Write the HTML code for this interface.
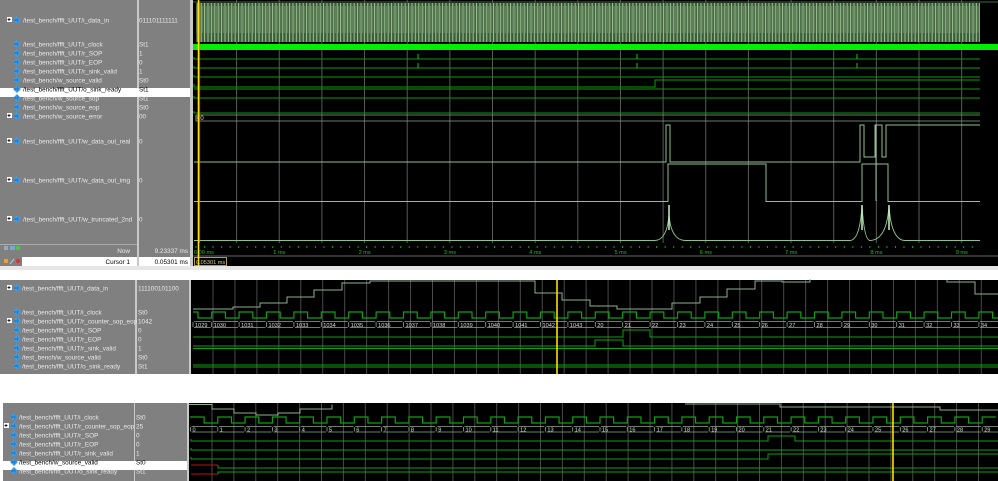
<!DOCTYPE html>
<html><head><meta charset="utf-8"><style>
html,body{margin:0;padding:0;background:#fff;width:998px;height:481px;overflow:hidden}
svg{display:block}
text{font-family:"Liberation Sans",sans-serif}
</style></head><body>
<svg id="s" width="998" height="481" xmlns="http://www.w3.org/2000/svg">
<defs>
<pattern id="dn" width="3.4" height="39" patternUnits="userSpaceOnUse">
<rect width="3.4" height="39" fill="#3e5c3a"/>
<line x1="0.6" y1="0" x2="0.6" y2="39" stroke="#a8d0a0" stroke-width="0.9"/>
<line x1="2.2" y1="6" x2="2.2" y2="33" stroke="#6f9468" stroke-width="0.8"/>
</pattern>
</defs>
<g id="g"></g>
</svg>
<script>
var g=document.getElementById('g');var o='';
function R(x,y,w,h,f){o+='<rect x="'+x+'" y="'+y+'" width="'+w+'" height="'+h+'" fill="'+f+'"/>';}
function L(x1,y1,x2,y2,c,w){o+='<line x1="'+x1+'" y1="'+y1+'" x2="'+x2+'" y2="'+y2+'" stroke="'+c+'" stroke-width="'+(w||1)+'"/>';}
function P(d,c,w){o+='<path d="'+d+'" fill="none" stroke="'+c+'" stroke-width="'+(w||1)+'"/>';}
function T(x,y,t,c,s,a){o+='<text x="'+x+'" y="'+y+'" fill="'+c+'" font-size="'+(s||7)+'"'+(a?' text-anchor="'+a+'"':'')+'>'+t+'</text>';}
function icon(x,y,exp,sel){ if(exp){R(x-7,y-3,5,5,'#fff');L(x-6.5,y-0.5,x-3.5,y-0.5,'#000',0.8);L(x-5,y-2,x-5,y+1,'#000',0.8);}
 o+='<path d="M'+(x+3)+' '+(y-4)+' L'+(x+7)+' '+(y)+' L'+(x+3)+' '+(y+4)+' L'+(x-1)+' '+y+'Z" fill="#3aa0e8"/>';
 o+='<path d="M'+(x)+' '+(y-1)+' l3 0 l0 -2 l2 3 l-2 3 l0 -2 l-3 0z" fill="#2d7fd0"/>';
 if(sel) R(x-1,y+2,4,2,'#ffd000');}
// ===== panel 1 =====
R(0,0,137,244,'#808080');R(137,0,2,266,'#c8c8c8');R(139,0,51,244,'#808080');R(190,0,3,266,'#c8c8c8');
R(193,0,805,243,'#000');
var rows1=[[23,'/test_bench/ffft_UUT/i_data_in','011101111111',1],[47,'/test_bench/ffft_UUT/i_clock','St1',0],[56,'/test_bench/ffft_UUT/r_SOP','1',0],[65,'/test_bench/ffft_UUT/r_EOP','0',0],[74,'/test_bench/ffft_UUT/r_sink_valid','1',0],[83,'/test_bench/w_source_valid','St0',0],[92,'/test_bench/ffft_UUT/o_sink_ready','St1',0],[101,'/test_bench/w_source_sop','St1',0],[110,'/test_bench/w_source_eop','St0',0],[119,'/test_bench/w_source_error','00',1],[144,'/test_bench/ffft_UUT/w_data_out_real','0',1],[183,'/test_bench/ffft_UUT/w_data_out_img','0',1],[222,'/test_bench/ffft_UUT/w_truncated_2nd','0',1]];
R(0,88,190,9,'#fff');
rows1.forEach(function(r){var sel=r[0]==92;icon(14,r[0]-3,r[3]);T(23,r[0]-0.5,r[1],sel?'#000':'#e8e8e8',6.4);T(139,r[0]-0.5,r[2],sel?'#000':'#e8e8e8',6.4);});
for(var x=236.6;x<998;x+=42.65)L(x,0,x,243,'#5a5a5a');
R(196,3,784,39,'url(#dn)');L(193,2,998,2,'#3d6b3d',1);
R(193,44,805,6,'#00f000');
P('M194 57v2H980','#0c9a0c');L(418,54,418,59,'#1fbf1f');L(637,54,637,59,'#1fbf1f');L(857,54,857,59,'#1fbf1f');
P('M194 66v2H980','#0c9a0c');L(418,63,418,68,'#1fbf1f');L(637,63,637,68,'#1fbf1f');L(857,63,857,68,'#1fbf1f');
P('M194 75v2H980','#0c9a0c');
P('M194 84v3H655V80H980','#0c9a0c');
P('M194 89H980','#0c9a0c');
P('M194 96v2H980','#0c9a0c');
P('M194 111v2H980','#0c9a0c');
P('M196 115H980M196 121H980','#7fa87f',0.8);P('M196 115v6','#7fa87f');T(197,120,'00','#ddd',6);
P('M194 162H666V125H670V162H860V125H864V157H875V125H882V157H886V125H980','#8fc08f');
P('M194 201.5H668V164H766V201.5H862V164H888V201.5H980','#8fc08f');L(876,125,876,201,'#8fc08f');
P('M194 240.5H655Q667 240 669 215Q671 240 685 240.5H850Q860 240 862 205Q864 240 870 240.5Q887 240 889 205Q891 240 905 240.5H980','#8fc08f');
L(669,205,669,230,'#c8f0c8',1.5);L(862,205,862,230,'#c8f0c8',1.5);L(889,205,889,230,'#c8f0c8',1.5);
R(0,244,137,13,'#808080');R(139,244,51,13,'#808080');R(0,257,137,9,'#fff');R(139,257,51,9,'#fff');
R(0,244,137,1,'#aaa');
T(130,253,'Now','#e8e8e8',6.4,'end');T(188,253,'9.23337 ms','#e8e8e8',6.4,'end');
T(130,264,'Cursor 1','#000',6.4,'end');T(188,264,'0.05301 ms','#000',6.4,'end');
R(0,257,22,9,'#808080');
R(4,246,4,4,'#9ab');R(10,246,5,4,'#7ac');o+='<circle cx="18" cy="248" r="2.2" fill="#4c4"/>';
R(4,259,4,4,'#e9a030');L(10,264,14,259,'#bbb',1.2);o+='<circle cx="18" cy="261" r="2.2" fill="#d33"/>';
R(193,243,805,23,'#000');
for(var x=196;x<980;x+=8.53)L(x,246,x,248,'#1a9a1a');
L(193,256,998,256,'#666');
var ms=['0.00 ms','1 ms','2 ms','3 ms','4 ms','5 ms','6 ms','7 ms','8 ms','9 ms'];
for(var i=0;i<10;i++)T(194+i*85.3+(i?-6:0),254,ms[i],'#1fbf1f',5.6);
R(194,257,33,8,'#000');o+='<rect x="194.5" y="257.5" width="32" height="8" fill="none" stroke="#b0a040"/>';T(196,264,'0.05301 ms','#e0d080',5.6);
L(198.5,0,198.5,266,'#ffe000',1.6);L(199.8,2,199.8,243,'#e04020',0.6);
R(0,266,998,4,'#e6e6e6');
// ===== panel 2 =====
R(0,280,135,94,'#808080');R(135,280,2,94,'#c8c8c8');R(137,280,52,94,'#808080');R(189,280,2,94,'#c8c8c8');R(191,280,807,94,'#000');
var rows2=[[291,'/test_bench/ffft_UUT/i_data_in','111100101100',1],[315,'/test_bench/ffft_UUT/i_clock','St0',0],[324,'/test_bench/ffft_UUT/r_counter_sop_eop','1042',1],[333,'/test_bench/ffft_UUT/r_SOP','0',0],[342,'/test_bench/ffft_UUT/r_EOP','0',0],[351,'/test_bench/ffft_UUT/r_sink_valid','1',0],[360,'/test_bench/w_source_valid','St0',0],[369,'/test_bench/ffft_UUT/o_sink_ready','St1',0]];
rows2.forEach(function(r){icon(14,r[0]-3,r[3]);T(22,r[0]-0.5,r[1],'#e8e8e8',6.4);T(138,r[0]-0.5,r[2],'#e8e8e8',6.4);});
for(var x=213;x<998;x+=21.95)L(x,280,x,374,'#4a4a4a');
P('M193 309H233V307H260V303H287V297H314V290H342V283H370V281H535V293H562V300H590V306H617V309H672V303H700V297H727V289H755V281H782V282H810V279M947 280V282H975V294H998','#8fb08f');
var d,lab2=['1029','1030','1031','1032','1033','1034','1035','1036','1037','1038','1039','1040','1041','1042','1043','20','21','22','23','24','25','26','27','28','29','30','31','32','33','34'];
var x0=184.3,p=27.4;
d='M193 312H'+(x0+p*0.5);
for(var i=1;i<32;i++){var xe=x0+p*i;d+='V318H'+xe+'V312H'+(xe+p*0.5);}
P(d+'V318H998','#10a010',1.2);
var bd='';
for(var i=0;i<30;i++){var xs=(i==0?193:x0+p*i);bd+='M'+(xs+1)+' 321.5H'+(x0+p*(i+1)-1)+'M'+(xs+1)+' 327.5H'+(x0+p*(i+1)-1)+'M'+(xs)+' 322v5';T(xs+2,327,lab2[i],'#ddd',5.6);}
P(bd,'#8fa88f',0.8);
P('M193 337H623V330H650V337H998','#10a010');
P('M193 346H595V340H623V346H998','#10a010');
P('M193 348.5H998','#10a010');
P('M193 365H998M193 367H998','#10a010');
L(557,280,557,374,'#ffe000',1.6);
// ===== panel 3 =====
R(3,403,131,78,'#808080');R(134,403,1,78,'#c8c8c8');R(135,403,52,78,'#808080');R(187,403,2,78,'#c8c8c8');R(189,403,809,78,'#000');
R(3,461,184,9,'#fff');
var rows3=[[420,'/test_bench/ffft_UUT/i_clock','St0',0],[429,'/test_bench/ffft_UUT/r_counter_sop_eop','25',1],[438,'/test_bench/ffft_UUT/r_SOP','0',0],[447,'/test_bench/ffft_UUT/r_EOP','0',0],[456,'/test_bench/ffft_UUT/r_sink_valid','1',0],[465,'/test_bench/w_source_valid','St0',0],[474,'/test_bench/ffft_UUT/o_sink_ready','St1',0]];
rows3.forEach(function(r){var sel=r[0]==465;icon(11,r[0]-3,r[3]);T(19,r[0]-0.5,r[1],sel?'#000':'#e8e8e8',6.4);T(136,r[0]-0.5,r[2],sel?'#000':'#e8e8e8',6.4);});
for(var x=212;x<998;x+=21.9)L(x,403,x,481,'#4a4a4a');
P('M189 404.5H212V409H234V413H256V415H278V413H300V409H332V404.5M685 404H780V407H940V410H998','#8fb08f');
x0=190.5;p=27.3;
d='M190 417H'+(x0+p*0.5);
for(var i=1;i<30;i++){var xe=x0+p*i;d+='V423H'+xe+'V417H'+(xe+p*0.5);}
P(d,'#10a010',1.2);
bd='';
for(var i=0;i<30;i++){var xs=x0+p*i;bd+='M'+(xs+1)+' 426.5H'+(xs+p-1)+'M'+(xs+1)+' 432H'+(xs+p-1)+'M'+xs+' 427v4.5';T(xs+2,431.5,''+i,'#ddd',5.6);}
P(bd,'#8fa88f',0.8);
P('M191 439V441H768V436H795V441H998','#10a010');
P('M191 448V450H998','#10a010');
P('M191 457V459H768V454H998','#10a010');
P('M191 465H218','#c01010');P('M218 465V468H998','#10a010');
P('M191 474H218','#c01010');P('M218 474V472H998','#10a010');
L(893,403,893,481,'#ffe000',1.6);
g.innerHTML=o;
</script>
</body></html>
